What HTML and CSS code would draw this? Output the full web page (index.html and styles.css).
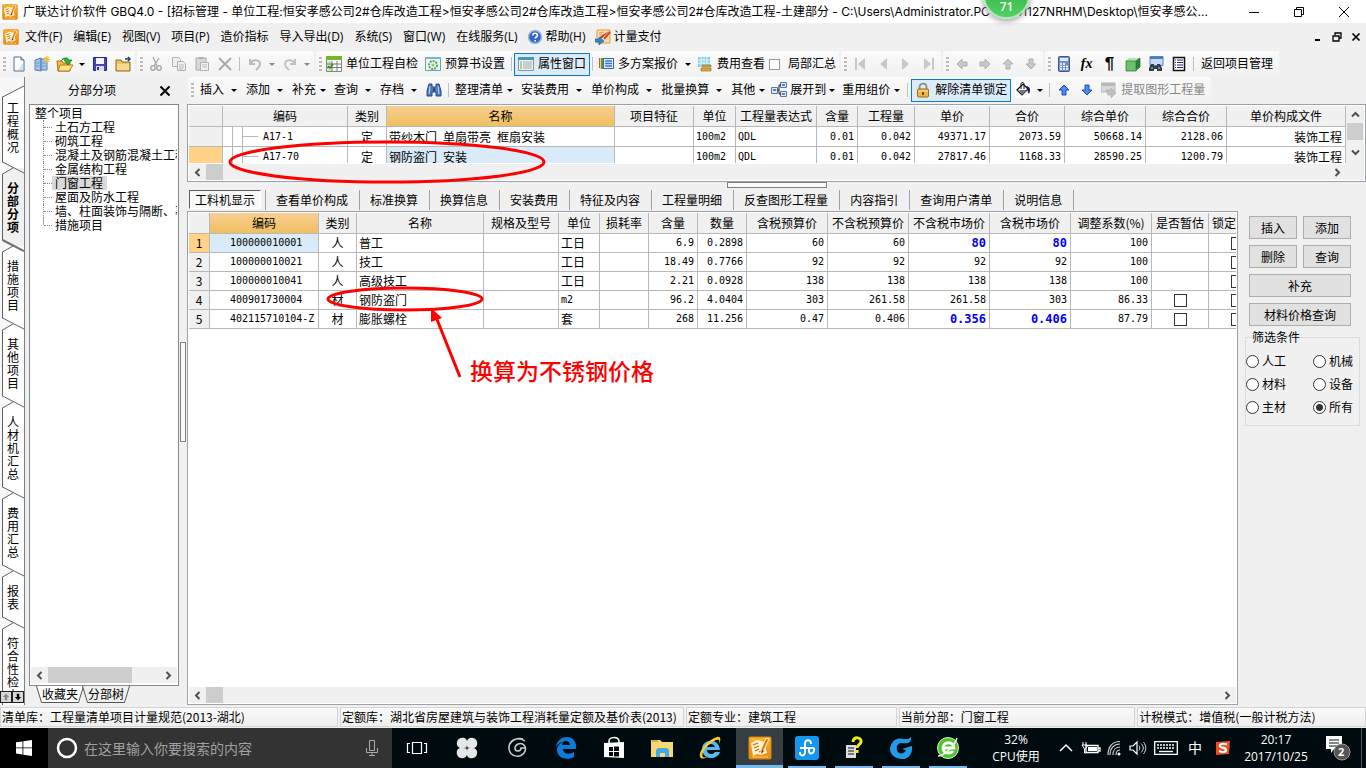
FILE: index.html
```html
<!DOCTYPE html>
<html lang="zh-CN">
<head>
<meta charset="utf-8">
<title>广联达计价软件 GBQ4.0</title>
<link rel="stylesheet" href="styles.css">
</head>
<body>
<svg class="defs" aria-hidden="true">
  <defs>
    <linearGradient id="gOrange" x1="0" y1="0" x2="0" y2="1"><stop offset="0" stop-color="#fbb62c"/><stop offset="1" stop-color="#ea860c"/></linearGradient>
    <symbol id="app" viewBox="0 0 24 24"><rect x="1" y="1" width="22" height="22" rx="1" fill="url(#gOrange)" stroke="#d9820c"/><path d="M3 7l6-3 4 1 3 1 3 11-6 2-4-1-4 2z" fill="#fff3cf"/><path d="M5 9l5-2M6 12l5-2M7 15l4-2M11 16l5-2" stroke="#c8650f" stroke-width="1.300"/><path d="M18 2l3 1-5 11-3 4 0-5z" fill="#e9791a" stroke="#fff3cf" stroke-width="1"/><path d="M13 18l1-4 2 1z" fill="#7c2c05"/><path d="M4 21h16" stroke="#fbd07a"/></symbol>
    <symbol id="new" viewBox="0 0 16 16"><path d="M3 1h7l3 3v11H3z" fill="#fff" stroke="#51718f"/><path d="M10 1v3h3" fill="#c6dcf2" stroke="#51718f"/><path d="M12 7v7H7z" fill="#cfe2f4"/></symbol>
    <symbol id="building" viewBox="0 0 16 16"><path d="M1 4l6-2v13l-6-1zM7 3h6v11H7z" fill="#c5dcf4" stroke="#4d7fb5"/><path d="M3 4v10M5 3v11M9 4v10M11 4v10M1 7h12M1 10h12" stroke="#6e9bcc" stroke-width=".8"/><path d="M13 0v7M9.500 3.500h7M11 1l4 5M15 1l-4 5" stroke="#f5c22b" stroke-width="1.200"/></symbol>
    <symbol id="open" viewBox="0 0 18 16"><path d="M1 5h5l1 2h7v8H2z" fill="#f1bd3b" stroke="#a87412"/><path d="M4 9h13l-4 6H2z" fill="#ffe188" stroke="#b07d1a"/><path d="M5 5c2-4 7-4 8-1h3l-4 5-4-5h2c-1-2-3-1-5 1z" fill="#35b52d" stroke="#14801a" stroke-width=".7"/></symbol>
    <symbol id="save" viewBox="0 0 16 16"><path d="M1.500 1.500h13v13h-13z" fill="#4545b5" stroke="#28287c"/><path d="M4 2h8v6H4z" fill="#f3f3fb"/><path d="M4 10h8v5H4z" fill="#dcdcea"/><path d="M5 11h2v3H5z" fill="#333399"/></symbol>
    <symbol id="folder" viewBox="0 0 16 16"><path d="M1 4h5l1 2h8v9H1z" fill="#e9c66c" stroke="#8e6b1d"/><path d="M2 8h12v6H2z" fill="#f5da8e"/><path d="M10 3h4M13 1l2 2-2 2" fill="none" stroke="#244a78" stroke-width="1.500"/></symbol>
    <symbol id="cut" viewBox="0 0 16 16"><path d="M5 1l4 9M11 2L6 10" stroke="#aaa" stroke-width="1.400"/><circle cx="5" cy="12" r="2.200" fill="none" stroke="#aaa" stroke-width="1.500"/><circle cx="11" cy="12" r="2.200" fill="none" stroke="#aaa" stroke-width="1.500"/></symbol>
    <symbol id="copy" viewBox="0 0 16 16"><path d="M1.500 1.500h6l2 2v7h-8z" fill="#eee" stroke="#b4b4b4"/><path d="M6.500 5.500h6l2 2v7h-8z" fill="#eee" stroke="#b0b0b0"/><path d="M8 9h5M8 11h5M8 13h4" stroke="#bbb"/></symbol>
    <symbol id="paste" viewBox="0 0 16 16"><path d="M2 2h10v12H2z" fill="#d8d8d8" stroke="#aaa"/><path d="M5 1h4v2H5z" fill="#aaa"/><path d="M6.500 6.500h8v8h-8z" fill="#f2f2f2" stroke="#b0b0b0"/><path d="M8 9h5M8 11h5" stroke="#bbb"/></symbol>
    <symbol id="del" viewBox="0 0 16 16"><path d="M2 2l12 12M14 2L2 14" stroke="#a8a8a8" stroke-width="1.800"/></symbol>
    <symbol id="undo" viewBox="0 0 16 16"><path d="M3 3v5h5M3 8c3-6 10-4 10 0 0 3-2 4-4 6" fill="none" stroke="#bbb" stroke-width="2"/></symbol>
    <symbol id="redo" viewBox="0 0 16 16"><path d="M13 3v5H8M13 8C10 2 3 4 3 8c0 3 2 4 4 6" fill="none" stroke="#c2c2c2" stroke-width="2"/></symbol>
    <symbol id="sheet" viewBox="0 0 16 16"><path d="M.5.5h15v15H.5z" fill="#fff" stroke="#7c8a7c"/><path d="M0 0h16v4H0z" fill="#72b62b"/><path d="M1 5h5v10H1z" fill="#cfe7b6"/><path d="M1 8h14M1 11.500h14M6 5v10M11 5v10" stroke="#777"/><path d="M2 10l2 2 3-4" fill="none" stroke="#2c8b20" stroke-width="1.400"/></symbol>
    <symbol id="budget" viewBox="0 0 16 16"><path d="M.5 1.500h15v13H.5z" fill="#eef6ec" stroke="#6b9fc2"/><path d="M0 1h16v2H0z" fill="#77b5da"/><circle cx="8" cy="9" r="4" fill="none" stroke="#53a95e" stroke-width="2" stroke-dasharray="2 1"/><circle cx="8" cy="9" r="1.500" fill="#8cc78e"/></symbol>
    <symbol id="props" viewBox="0 0 16 16"><path d="M.5 1.500h15v13H.5z" fill="#eef1f3" stroke="#8a9499"/><path d="M0 1h16v3H0z" fill="#419cac"/><path d="M2 6h2M2 8h2M2 10h2M2 12h2" stroke="#61ad5e"/><path d="M5 6h9M5 8h9M5 10h9M5 12h9" stroke="#a3aaae"/></symbol>
    <symbol id="multi" viewBox="0 0 16 16"><path d="M1 2h4v10H1z" fill="#e04c3b"/><path d="M2 2h4v11H2z" fill="#ffd53a"/><path d="M3 2h4v11H3z" fill="#47a54b"/><path d="M5.500 2.500h10v10h-10z" fill="#e8f1ff" stroke="#2e62b4"/><path d="M7 5h7M7 7.500h7M7 10h7" stroke="#3d74c7" stroke-width="1.500"/></symbol>
    <symbol id="cost" viewBox="0 0 16 16"><path d="M1 1h12v10H1z" fill="#7fd0e6"/><path d="M1 4h12M1 7h12M4 1v10M7 1v10M10 1v10" stroke="#fff" stroke-width=".8"/><path d="M5 9h9v2H5zM4 12h10v3H4z" fill="#d7a847" stroke="#966a20" stroke-width=".6"/></symbol>
    <symbol id="first" viewBox="0 0 16 16"><path d="M3 2h2v12H3zM13 2v12L6 8z" fill="#c8c8c8"/></symbol>
    <symbol id="prev" viewBox="0 0 16 16"><path d="M12 2v12L5 8z" fill="#c8c8c8"/></symbol>
    <symbol id="next" viewBox="0 0 16 16"><path d="M4 2v12l7-6z" fill="#c8c8c8"/></symbol>
    <symbol id="last" viewBox="0 0 16 16"><path d="M11 2h2v12h-2zM3 2v12l7-6z" fill="#c8c8c8"/></symbol>
    <symbol id="arr" viewBox="0 0 16 16"><path d="M8 3l5 5h-3v5H6V8H3z"/></symbol>
    <symbol id="calc" viewBox="0 0 16 16"><rect x="2.500" y=".5" width="11" height="15" rx="1" fill="#6e90cd" stroke="#3a5797"/><path d="M4 2h8v3H4z" fill="#dfe9fa"/><path d="M4 8h8M4 10.500h8M4 13h8" stroke="#fff" stroke-width="1.500" stroke-dasharray="2 1"/><path d="M10 8h2" stroke="#d33" stroke-width="1.500"/></symbol>
    <symbol id="cube" viewBox="0 0 16 16"><path d="M1 5l4-3h10v9l-4 3H1z" fill="#2c7d36"/><path d="M1 5h10v10H1z" fill="#6cc06e"/><path d="M1 5l4-3h10l-4 3z" fill="#b5e3b2"/><path d="M1 5h10v10H1zM11 5l4-3M15 2v9l-4 4" fill="none" stroke="#2b7232" stroke-width=".7"/></symbol>
    <symbol id="bino" viewBox="0 0 16 16"><path d="M3 2h3v3h4V2h3l2 7v5h-5v-4H6v4H1V9z" fill="#4f7ab8" stroke="#244a83"/><path d="M4 4L3 12M12 4l1 8" stroke="#c9daf0"/><path d="M7 6h2v3H7z" fill="#244a83"/></symbol>
    <symbol id="find" viewBox="0 0 16 16"><path d="M2 .5h13v9H2z" fill="#c6daf7" stroke="#5b80b9"/><path d="M2 1h13v2H2z" fill="#4c78c4"/><path d="M3 8h3v2h3V8h3l2 4v3H9v-2H6v2H1v-3z" fill="#333c48"/><path d="M3 12h2M10 12h2" stroke="#c0cddb"/></symbol>
    <symbol id="list" viewBox="0 0 16 16"><path d="M2.500 1.500h11v13h-11z" fill="#fff" stroke="#111" stroke-width="1.500"/><path d="M4 4h1M6 4h6M4 6.500h1M6 6.500h6M4 9h1M6 9h6M4 11.500h1M6 11.500h6" stroke="#22228c" stroke-width="1.200"/></symbol>
    <symbol id="help" viewBox="0 0 16 16"><circle cx="8" cy="8" r="6.500" fill="#3568c4" stroke="#9db7df" stroke-width="1.500"/><path d="M5.800 6.500c0-3 4.600-3 4.600 0 0 1.500-2.200 1.500-2.200 3M8.200 11v1.600" fill="none" stroke="#fff" stroke-width="1.600"/></symbol>
    <symbol id="pay" viewBox="0 0 16 16"><path d="M2 1h13v13H2z" fill="#fae0ae" stroke="#e49b31"/><path d="M4 4l5-1M4 6l3-1" stroke="#e0a050"/><path d="M14 2L7 9l-3 1 2-3z" fill="#b82b2b"/><path d="M15 3L9 10" stroke="#d24a26" stroke-width="2"/><path d="M0 10h4V8l5 4-5 4v-3H0z" fill="#2d8bd3" stroke="#1a5b9a" stroke-width=".6"/></symbol>
    <symbol id="expand" viewBox="0 0 16 16"><path d="M.5 5.500h6v6h-6zM9.500.5h6v5h-6zM9.500 9.500h6v5h-6z" fill="#dce7f8" stroke="#5377b0"/><path d="M6 8h2M8 3v9M8 3h2M8 12h2" fill="none" stroke="#222"/><path d="M2 8h3M11 3h3M11 12h3" stroke="#3863a6" stroke-width="1.500"/></symbol>
    <symbol id="lock" viewBox="0 0 16 16"><path d="M4.500 8V5c0-4.500 7-4.500 7 0v3" fill="none" stroke="#8d8d8d" stroke-width="1.800"/><rect x="2.500" y="7" width="11" height="8" rx="1" fill="#f0b545" stroke="#9a6b16"/><path d="M3 9h10" stroke="#fbe19c"/><path d="M8 10v3" stroke="#5a3c06" stroke-width="1.800"/></symbol>
    <symbol id="bucket" viewBox="0 0 16 16"><path d="M0 0h16v16H0z" fill="#fff"/><path d="M2 8l6-6 5 5-6 6z" fill="#fff" stroke="#111" stroke-width="1.200"/><path d="M4 8h8l-5 5z" fill="#777"/><path d="M6 7V2c0-2 3-2 3 0v5" fill="none" stroke="#111"/><path d="M11 4c4 0 5 4 3 8-1-2-2-3-1-5z" fill="#14147c"/></symbol>
    <symbol id="extract" viewBox="0 0 16 16"><path d="M0 1h14v9H0z" fill="#d8d8d8" stroke="#b5b5b5"/><path d="M0 1h14v3H0z" fill="#b8b8b8"/><path d="M5 8h5V6l5 5-5 5v-3H7z" fill="#c0c0c0" stroke="#aaa" stroke-width=".6"/></symbol>
  </defs>
</svg>

<div class="window">
  <header class="title">
    <svg class="i16"><use href="#app"/></svg>
    <h1>广联达计价软件 GBQ4.0 - [招标管理 - 单位工程:恒安孝感公司2#仓库改造工程&gt;恒安孝感公司2#仓库改造工程&gt;恒安孝感公司2#仓库改造工程-土建部分 - C:\Users\Administrator.PC-20141127NRHM\Desktop\恒安孝感公...</h1>
    <div class="winbtns">
      <button aria-label="最小化"><svg class="i12" viewBox="0 0 12 12"><path d="M1 6.500h10" stroke="#000"/></svg></button>
      <button aria-label="还原"><svg class="i12" viewBox="0 0 12 12"><path d="M1.500 3.500h7v7h-7zM3.500 3v-1.500h7v7H9" fill="none" stroke="#000"/></svg></button>
      <button aria-label="关闭"><svg class="i12" viewBox="0 0 12 12"><path d="M1 1l10 10M11 1L1 11" stroke="#000"/></svg></button>
    </div>
    <span class="bubble">71</span>
  </header>

  <nav class="menu">
    <svg class="i16"><use href="#app"/></svg>
    <button>文件(F)</button><button>编辑(E)</button><button>视图(V)</button><button>项目(P)</button><button>造价指标</button><button>导入导出(D)</button><button>系统(S)</button><button>窗口(W)</button><button>在线服务(L)</button>
    <button class="withicon"><svg class="i16"><use href="#help"/></svg>帮助(H)</button>
    <button class="withicon"><svg class="i16"><use href="#pay"/></svg>计量支付</button>
    <div class="mdi">
      <button aria-label="最小化文档"><svg class="i10" viewBox="0 0 10 10"><path d="M2 8h5" stroke="#000" stroke-width="2"/></svg></button>
      <button aria-label="还原文档"><svg class="i10" viewBox="0 0 10 10"><path d="M3 3V1h6v5H7M1 4h6v5H1z" fill="none" stroke="#000" stroke-width="1.300"/></svg></button>
      <button aria-label="关闭文档"><svg class="i10" viewBox="0 0 10 10"><path d="M1.500 1.500l7 7M8.500 1.500l-7 7" stroke="#000" stroke-width="1.700"/></svg></button>
    </div>
  </nav>

  <div class="bar">
    <div class="group">
      <i class="grip"></i>
      <button class="slot" aria-label="新建"><svg class="i16"><use href="#new"/></svg></button>
      <button class="slot" aria-label="新建项目"><svg class="i16"><use href="#building"/></svg></button>
      <button class="slot" aria-label="打开"><svg class="i18"><use href="#open"/></svg></button>
      <button class="arrow" aria-label="打开选项"></button>
      <button class="slot" aria-label="保存"><svg class="i16"><use href="#save"/></svg></button>
      <button class="slot" aria-label="文件夹"><svg class="i16"><use href="#folder"/></svg></button>
    </div>
    <div class="group">
      <i class="grip"></i>
      <button class="slot" aria-label="剪切"><svg class="i16"><use href="#cut"/></svg></button>
      <button class="slot" aria-label="复制"><svg class="i16"><use href="#copy"/></svg></button>
      <button class="slot" aria-label="粘贴"><svg class="i16"><use href="#paste"/></svg></button>
      <button class="slot" aria-label="删除行"><svg class="i16"><use href="#del"/></svg></button>
      <i class="sep"></i>
      <button class="slot" aria-label="撤销"><svg class="i16"><use href="#undo"/></svg></button>
      <button class="arrow dim" aria-label="撤销选项"></button>
      <button class="slot" aria-label="重做"><svg class="i16"><use href="#redo"/></svg></button>
      <button class="arrow dim" aria-label="重做选项"></button>
    </div>
    <div class="group">
      <i class="grip"></i>
      <button class="tool"><svg class="i16"><use href="#sheet"/></svg>单位工程自检</button>
      <button class="tool"><svg class="i16"><use href="#budget"/></svg>预算书设置</button>
      <i class="sep tight"></i>
      <button class="tool pressed"><svg class="i16"><use href="#props"/></svg>属性窗口</button>
      <i class="sep tight"></i>
      <button class="tool"><svg class="i16"><use href="#multi"/></svg>多方案报价</button>
      <button class="arrow" aria-label="报价选项"></button>
      <button class="tool"><svg class="i16"><use href="#cost"/></svg>费用查看</button>
      <label class="toolcheck"><input type="checkbox">局部汇总</label>
    </div>
    <div class="group">
      <i class="grip"></i>
      <button class="slot" aria-label="第一条"><svg class="i16"><use href="#first"/></svg></button>
      <button class="slot" aria-label="上一条"><svg class="i16"><use href="#prev"/></svg></button>
      <button class="slot" aria-label="下一条"><svg class="i16"><use href="#next"/></svg></button>
      <button class="slot" aria-label="最后一条"><svg class="i16"><use href="#last"/></svg></button>
    </div>
    <div class="group">
      <i class="grip"></i>
      <button class="slot" aria-label="左移"><svg class="i16 grey left"><use href="#arr"/></svg></button>
      <button class="slot" aria-label="右移"><svg class="i16 grey right"><use href="#arr"/></svg></button>
      <button class="slot" aria-label="上移"><svg class="i16 grey"><use href="#arr"/></svg></button>
      <button class="slot" aria-label="下移"><svg class="i16 grey down"><use href="#arr"/></svg></button>
    </div>
    <div class="group">
      <i class="grip"></i>
      <button class="slot" aria-label="计算器"><svg class="i16"><use href="#calc"/></svg></button>
      <button class="slot fx">fx</button>
      <button class="slot pilcrow">¶</button>
      <button class="slot" aria-label="图元"><svg class="i16"><use href="#cube"/></svg></button>
      <button class="slot" aria-label="查找"><svg class="i16"><use href="#find"/></svg></button>
      <button class="slot" aria-label="列表"><svg class="i16"><use href="#list"/></svg></button>
      <i class="sep"></i>
      <button class="plain">返回项目管理</button>
    </div>
  </div>

  <div class="body">
    <nav class="vtabs">
      <button>工程概况<svg viewBox="0 0 23 13"><path class="wedge" d="M0 1h1L12 7 1 13H0z"/><path class="edge" d="M1.500 1L23 12M1.500 13L12 7"/></svg></button>
      <button class="on">分部分项<svg viewBox="0 0 23 13"><path class="wedge" d="M0 1h1L12 7 1 13H0z"/><path class="edge bold" d="M1.500 1L23 12"/><path class="edge" d="M1.500 13L12 7"/></svg></button>
      <button>措施项目<svg viewBox="0 0 23 13"><path class="wedge" d="M0 1h1L12 7 1 13H0z"/><path class="edge" d="M1.500 1L23 12M1.500 13L12 7"/></svg></button>
      <button>其他项目<svg viewBox="0 0 23 13"><path class="wedge" d="M0 1h1L12 7 1 13H0z"/><path class="edge" d="M1.500 1L23 12M1.500 13L12 7"/></svg></button>
      <button>人材机汇总<svg viewBox="0 0 23 13"><path class="wedge" d="M0 1h1L12 7 1 13H0z"/><path class="edge" d="M1.500 1L23 12M1.500 13L12 7"/></svg></button>
      <button>费用汇总<svg viewBox="0 0 23 13"><path class="wedge" d="M0 1h1L12 7 1 13H0z"/><path class="edge" d="M1.500 1L23 12M1.500 13L12 7"/></svg></button>
      <button>报表<svg viewBox="0 0 23 13"><path class="wedge" d="M0 1h1L12 7 1 13H0z"/><path class="edge" d="M1.500 1L23 12M1.500 13L12 7"/></svg></button>
      <button class="rest">符合性检查</button>
      <svg class="cap" viewBox="0 0 23 20"><path class="wedge" d="M0 0h23v10L1 20H0z"/><path class="edge" d="M1.500 20L23 9"/></svg>
      <div class="updown">
        <button aria-label="向上滚动"><svg viewBox="0 0 10 10"><path d="M5 1l4 4H6.500v4h-3V5H1z" fill="#888"/></svg></button>
        <button aria-label="向下滚动"><svg viewBox="0 0 10 10"><path d="M5 9l4-4H6.500V1h-3v4H1z" fill="#000"/></svg></button>
      </div>
    </nav>

    <aside class="side">
      <div class="sidehead"><span>分部分项</span><button aria-label="关闭面板"><svg viewBox="0 0 12 12"><path d="M1.500 1.500l9 9M10.500 1.500l-9 9" stroke="#000" stroke-width="2"/></svg></button></div>
      <div class="treebox">
        <div class="root">整个项目</div>
        <ul class="tree">
          <li><span>土石方工程</span></li><li><span>砌筑工程</span></li><li><span>混凝土及钢筋混凝土工程</span></li><li><span>金属结构工程</span></li><li class="sel"><span>门窗工程</span></li><li><span>屋面及防水工程</span></li><li><span>墙、柱面装饰与隔断、幕墙</span></li><li><span>措施项目</span></li>
        </ul>
        <div class="hs"><svg viewBox="0 0 9 9"><path d="M6.500 1L3 4.500 6.500 8"/></svg><i class="thumb wide"></i><svg class="end" viewBox="0 0 9 9"><path d="M2.500 1L6 4.500 2.500 8"/></svg></div>
      </div>
      <div class="sidetabs">
        <button class="t1"><svg viewBox="0 0 48 17" preserveAspectRatio="none"><path d="M.5 0l5 16.500h37L47.500 0" fill="#fff" stroke="#555"/></svg><span>收藏夹</span></button>
        <button class="t2"><svg viewBox="0 0 48 17" preserveAspectRatio="none"><path d="M.5 0l5 16.500h37L47.500 0" fill="#f0f0f0" stroke="#555"/></svg><span>分部树</span></button>
      </div>
    </aside>

    <div class="vsplit"><i></i></div>

    <main class="work">
      <div class="bar second">
        <div class="group">
          <i class="grip"></i>
          <button class="dd">插入</button><button class="dd">添加</button><button class="dd near">补充</button><button class="dd">查询</button><button class="dd">存档</button>
          <button class="slot" aria-label="查找"><svg class="i16"><use href="#bino"/></svg></button>
          <i class="sep"></i>
          <button class="dd near">整理清单</button><button class="dd">安装费用</button><button class="dd">单价构成</button><button class="dd">批量换算</button><button class="dd near">其他</button>
          <button class="tool expand"><svg class="i16"><use href="#expand"/></svg>展开到</button><button class="arrow" aria-label="展开选项"></button>
          <button class="dd near">重用组价</button>
          <i class="sep"></i>
          <button class="tool pressed"><svg class="i16"><use href="#lock"/></svg>解除清单锁定</button>
          <button class="slot" aria-label="填充颜色"><svg class="i16"><use href="#bucket"/></svg></button><button class="arrow" aria-label="颜色选项"></button>
          <i class="sep"></i>
          <button class="slot" aria-label="上移清单"><svg class="i16 blue"><use href="#arr"/></svg></button>
          <button class="slot" aria-label="下移清单"><svg class="i16 blue down"><use href="#arr"/></svg></button>
          <button class="tool dimtext"><svg class="i16"><use href="#extract"/></svg>提取图形工程量</button>
        </div>
      </div>

      <section class="grid upper">
        <div class="uppermain">
          <div class="clip">
            <table>
              <colgroup><col class="w34"><col class="w125"><col class="w39"><col class="w228"><col class="w79"><col class="w42"><col class="w81"><col class="w41"><col class="w57"><col class="w75"><col class="w75"><col class="w81"><col class="w81"><col class="w119"></colgroup>
              <thead><tr><th></th><th>编码</th><th>类别</th><th class="hot">名称</th><th>项目特征</th><th>单位</th><th>工程量表达式</th><th>含量</th><th>工程量</th><th>单价</th><th>合价</th><th>综合单价</th><th>综合合价</th><th>单价构成文件</th></tr></thead>
              <tbody>
                <tr><th></th><td class="node n"><i></i>A17-1</td><td class="mid">定</td><td>带纱木门&ensp;单扇带亮&ensp;框扇安装</td><td></td><td class="n">100m2</td><td class="n">QDL</td><td class="n r">0.01</td><td class="n r">0.042</td><td class="n r">49371.17</td><td class="n r">2073.59</td><td class="n r">50668.14</td><td class="n r">2128.06</td><td class="r">装饰工程</td></tr>
                <tr><th class="cur"></th><td class="node n"><i></i>A17-70</td><td class="mid">定</td><td class="pick">钢防盗门&ensp;安装</td><td></td><td class="n">100m2</td><td class="n">QDL</td><td class="n r">0.01</td><td class="n r">0.042</td><td class="n r">27817.46</td><td class="n r">1168.33</td><td class="n r">28590.25</td><td class="n r">1200.79</td><td class="r">装饰工程</td></tr>
              </tbody>
            </table>
          </div>
          <div class="hs"><svg viewBox="0 0 9 9"><path d="M6.500 1L3 4.500 6.500 8"/></svg><i class="thumb"></i><svg class="end" viewBox="0 0 9 9"><path d="M2.500 1L6 4.500 2.500 8"/></svg></div>
        </div>
        <div class="vs"><svg viewBox="0 0 9 9"><path d="M1 6.500L4.500 3 8 6.500"/></svg><i></i><svg viewBox="0 0 9 9"><path d="M1 2.500L4.500 6 8 2.500"/></svg></div>
      </section>

      <div class="hsplit"><i></i></div>

      <nav class="tabs"><button class="on">工料机显示</button><button>查看单价构成</button><button>标准换算</button><button>换算信息</button><button>安装费用</button><button>特征及内容</button><button>工程量明细</button><button>反查图形工程量</button><button>内容指引</button><button>查询用户清单</button><button>说明信息</button></nav>

      <div class="lower">
        <section class="grid detail">
          <div class="clip">
            <table>
              <colgroup><col class="w21"><col class="w109"><col class="w38"><col class="w127"><col class="w75"><col class="w41"><col class="w49"><col class="w49"><col class="w49"><col class="w81"><col class="w81"><col class="w81"><col class="w81"><col class="w81"><col class="w57"><col class="w57"></colgroup>
              <thead><tr><th></th><th class="hot">编码</th><th>类别</th><th>名称</th><th>规格及型号</th><th>单位</th><th>损耗率</th><th>含量</th><th>数量</th><th>含税预算价</th><th>不含税预算价</th><th>不含税市场价</th><th>含税市场价</th><th>调整系数(%)</th><th>是否暂估</th><th class="l">锁定</th></tr></thead>
              <tbody>
                <tr><th class="cur">1</th><td class="code n pick">100000010001</td><td class="mid">人</td><td>普工</td><td></td><td>工日</td><td></td><td class="n r">6.9</td><td class="n r">0.2898</td><td class="n r">60</td><td class="n r">60</td><td class="b r">80</td><td class="b r">80</td><td class="n r">100</td><td></td><td><input type="checkbox" aria-label="锁定第1行"></td></tr>
                <tr><th>2</th><td class="code n">100000010021</td><td class="mid">人</td><td>技工</td><td></td><td>工日</td><td></td><td class="n r">18.49</td><td class="n r">0.7766</td><td class="n r">92</td><td class="n r">92</td><td class="n r">92</td><td class="n r">92</td><td class="n r">100</td><td></td><td><input type="checkbox" aria-label="锁定第2行"></td></tr>
                <tr><th>3</th><td class="code n">100000010041</td><td class="mid">人</td><td>高级技工</td><td></td><td>工日</td><td></td><td class="n r">2.21</td><td class="n r">0.0928</td><td class="n r">138</td><td class="n r">138</td><td class="n r">138</td><td class="n r">138</td><td class="n r">100</td><td></td><td><input type="checkbox" aria-label="锁定第3行"></td></tr>
                <tr><th>4</th><td class="code n">400901730004</td><td class="mid">材</td><td>钢防盗门</td><td></td><td class="n">m2</td><td></td><td class="n r">96.2</td><td class="n r">4.0404</td><td class="n r">303</td><td class="n r">261.58</td><td class="n r">261.58</td><td class="n r">303</td><td class="n r">86.33</td><td><input type="checkbox" aria-label="暂估第4行"></td><td><input type="checkbox" aria-label="锁定第4行"></td></tr>
                <tr><th>5</th><td class="code n">402115710104-Z</td><td class="mid">材</td><td>膨胀螺栓</td><td></td><td>套</td><td></td><td class="n r">268</td><td class="n r">11.256</td><td class="n r">0.47</td><td class="n r">0.406</td><td class="b r">0.356</td><td class="b r">0.406</td><td class="n r">87.79</td><td><input type="checkbox" aria-label="暂估第5行"></td><td><input type="checkbox" aria-label="锁定第5行"></td></tr>
              </tbody>
            </table>
          </div>
          <div class="hs"><svg viewBox="0 0 9 9"><path d="M6.500 1L3 4.500 6.500 8"/></svg><i class="thumb"></i><svg class="end" viewBox="0 0 9 9"><path d="M2.500 1L6 4.500 2.500 8"/></svg></div>
        </section>
        <aside class="actions">
          <div class="btns"><button>插入</button><button>添加</button><button>删除</button><button>查询</button><button class="full">补充</button><button class="full">材料价格查询</button></div>
          <fieldset><legend>筛选条件</legend>
            <label><input type="radio" name="f">人工</label><label><input type="radio" name="f">机械</label>
            <label><input type="radio" name="f">材料</label><label><input type="radio" name="f">设备</label>
            <label><input type="radio" name="f">主材</label><label><input type="radio" name="f" checked>所有</label>
          </fieldset>
        </aside>
      </div>
    </main>
  </div>

  <footer class="status"><span>清单库：工程量清单项目计量规范(2013-湖北)</span><span>定额库：湖北省房屋建筑与装饰工程消耗量定额及基价表(2013)</span><span>定额专业：建筑工程</span><span>当前分部：门窗工程</span><span>计税模式：增值税(一般计税方法)</span></footer>

  <div class="taskbar">
    <button class="start" aria-label="开始"><svg viewBox="0 0 16 16"><path d="M0 2.300l6.500-.9v6.100H0zM7.300 1.300L16 0v7.500H7.300zM0 8.300h6.500v6.200L0 13.600zM7.300 8.300H16V16l-8.700-1.300z" fill="#fff"/></svg></button>
    <label class="search"><svg class="ring" viewBox="0 0 22 22"><circle cx="11" cy="11" r="9" fill="none" stroke="#fff" stroke-width="2.500"/></svg><input type="text" placeholder="在这里输入你要搜索的内容" aria-label="搜索"><svg class="mic" viewBox="0 0 12 16"><path d="M3.500.5h5v10h-5zM.5 8v4.500h11V8M6 12.500v3M3 15.500h6" fill="none" stroke="#aaa"/></svg></label>
    <div class="pins">
      <button class="a" aria-label="任务视图"><svg viewBox="0 0 24 24"><path d="M7.500 6.500h9v11h-9zM5 7.500H2.500v9H5M19 7.500h2.500v9H19" fill="none" stroke="#fff" stroke-width="1.200"/></svg></button>
      <button class="a" aria-label="四叶应用"><svg viewBox="0 0 24 24"><path d="M11.500 11.500C4 14 1 10 2 6c1-5 7-5 9-3 2 3 1 5 .5 8.500zM12.500 11.500C10 4 14 1 18 2c5 1 5 7 3 9-3 2-5 1-8.500.5zM12.500 12.500C20 10 23 14 22 18c-1 5-7 5-9 3-2-3-1-5-.5-8.500zM11.500 12.500C14 20 10 23 6 22c-5-1-5-7-3-9 3-2 5-1 8.500-.5z" fill="#e7e7e7"/></svg></button>
      <button class="a" aria-label="螺旋应用"><svg viewBox="0 0 24 24"><path d="M20 5C13 0 3 4 4 13c1 7 10 10 15 4 4-6-1-11-6-9-4 2-4 7 0 7 2 0 3-1 3-3h4M18 3C9 1 1 8 5 16" fill="none" stroke="#ccc" stroke-width="1.500"/></svg></button>
      <button class="b" aria-label="Edge"><svg viewBox="0 0 24 24"><path d="M2 11C3 4 8 1 13 1c6 0 9 5 9 9v3H9c0 5 6 6 11 3v5c-7 4-17 1-17-7 0-4 3-7 7-9-1 1-2 3-2 4h8C16 3 6 4 2 11z" fill="#0b7bdc"/></svg></button>
      <button class="b" aria-label="应用商店"><svg viewBox="0 0 24 24"><path d="M2 7l20-1v16L2 21z" fill="#fff"/><path d="M7 8V5c0-4 9-5 10 0v2" fill="none" stroke="#fff" stroke-width="1.500"/><path d="M7 11h4v4H7zM12 10.500h5V15h-5zM7 16h4v4H7zM12 16h5v4.500h-5z" fill="#000b10"/></svg></button>
      <button class="b" aria-label="文件资源管理器"><svg viewBox="0 0 24 24"><path d="M1 4h9l2 2h11v15H1z" fill="#f8d775"/><path d="M2 4h6v2H2z" fill="#dba63a"/><path d="M6 21v-7l2-2h9l2 2v7h-4v-4H10v4z" fill="#42a9e6"/></svg></button>
      <button class="b" aria-label="Internet Explorer"><svg viewBox="0 0 24 24"><path d="M22 14H9c0 5 6 5 8 2h5c-3 9-18 8-18-3C4 3 21 1 22 14zM9 11h8c-1-4-7-4-8 0z" fill="#55baf0"/><path d="M3 22C-2 18 9 4 19 1c4-1 4 3 2 7 1-4 0-5-3-4C10 8 2 17 5 21c1 1 3 0 5-1-3 3-6 3-7 2z" fill="#f7cc2c"/></svg></button>
      <button class="c active" aria-label="广联达"><svg viewBox="0 0 24 24"><use href="#app"/></svg></button>
      <button class="c run" aria-label="云应用"><svg viewBox="0 0 24 24"><rect width="24" height="24" rx="3" fill="#1496f0"/><path d="M16 8c0-5-6-5-6 0v8c0 5-6 4-5 0M5 12h14M14 12v3c0 4 6 3 5-3" fill="none" stroke="#fff" stroke-width="2"/></svg></button>
      <button class="c run" aria-label="帮助文档"><svg viewBox="0 0 24 24"><path d="M4 9h10v13H4z" fill="#ddd"/><path d="M6 12h6M6 15h6M6 18h6" stroke="#555" stroke-width="1.500"/><path d="M11 6c0-6 9-5 8 0-1 3-4 3-4 6M15 14v3" fill="none" stroke="#f5ed12" stroke-width="3"/></svg></button>
      <button class="c run" aria-label="G应用"><svg viewBox="0 0 24 24"><path d="M22 1c1 6-4 7-9 6-4 0-6 3-5 7 1 5 8 4 9 0l-4-1 10-3c1 8-4 14-11 13C3 22-1 15 2 9c3-7 9-7 13-6 4 0 5 0 7-2z" fill="#239bed"/></svg></button>
      <button class="c run" aria-label="绿色浏览器"><svg viewBox="0 0 24 24"><circle cx="12" cy="12" r="10.500" fill="#4fc22e" stroke="#d8f5ca"/><path d="M6 12h12c0-7-11-7-11 0 0 6 8 6 10 3" fill="none" stroke="#fff" stroke-width="2.800"/><path d="M2 20C8 20 18 11 21 2" fill="none" stroke="#eafbdc" stroke-width="1.500"/></svg></button>
    </div>
    <div class="cpu">32%<br>CPU使用</div>
    <div class="tray">
      <svg viewBox="0 0 24 16"><path d="M6 11l6-6 6 6" fill="none" stroke="#fff" stroke-width="1.500"/></svg>
      <svg viewBox="0 0 24 16"><path d="M8 5.500h12v7H8zM20 8h2v3h-2" fill="none" stroke="#fff" stroke-width="1.300"/><path d="M10 7h9v4h-9z" fill="#fff"/><path d="M5 2v3M8 2v3M4 5h5v2L6.500 9zM6.500 9v4H8" fill="none" stroke="#fff"/></svg>
      <svg viewBox="0 0 24 16"><path d="M8 15C8 8 12 4 18 4M6 15C6 6 11 1.500 18 1.500M11 15c0-5 3-8 7-8M14 15c0-3 1-5 4-5" fill="none" stroke="#ccc" stroke-width="1.200"/><circle cx="17" cy="14" r="1.500" fill="#fff"/></svg>
      <svg viewBox="0 0 24 16"><path d="M4 6h3l4-4v12l-4-4H4z" fill="none" stroke="#fff" stroke-width="1.200"/><path d="M13 5.500c1 1 1 4 0 5M15 3.500c3 3 3 6 0 9M17.500 2c3 4 3 8 0 12" fill="none" stroke="#ddd"/></svg>
      <svg class="kbd" viewBox="0 0 24 16"><path d="M.7 1.700h22.600v12.600H.7z" fill="none" stroke="#fff" stroke-width="1.300"/><path d="M3 5h18M3 8h18" stroke="#fff" stroke-width="1.400" stroke-dasharray="2 1"/><path d="M5 11.500h14" stroke="#fff" stroke-width="1.400"/></svg>
      <span>中</span>
      <svg class="sogou" viewBox="0 0 16 16"><path d="M1 2l14-1-1 13-13 1z" fill="#f04b22"/><path d="M12 4.500C8 3 4 4 5 6.500c1 1.500 6 1 6 3.500s-4 2.500-7 1" fill="none" stroke="#fff" stroke-width="2.200"/></svg>
    </div>
    <div class="clock">20:17<br>2017/10/25</div>
    <button class="notice" aria-label="通知"><svg viewBox="0 0 28 28"><path d="M2 2h16v13H10l-3 4v-4H2z" fill="#fff"/><path d="M5 6h10M5 9h10M5 12h8" stroke="#111"/><circle cx="18" cy="18" r="8" fill="#555" stroke="#999"/></svg><b>2</b></button>
    <i class="peek"></i>
  </div>

  <div class="marks">
    <svg><g fill="none" stroke="#f00" stroke-width="3"><ellipse cx="387" cy="162" rx="157" ry="20"/><ellipse cx="405" cy="299" rx="77" ry="11"/><path d="M460 377l-24-60"/></g><path d="M431 308v14l11-4z" fill="#f00"/></svg>
    <p>换算为不锈钢价格</p>
  </div>
</div>
</body>
</html>
```
FILE: styles.css
```css
* { box-sizing: border-box; }
body { margin: 0; font: 12px/16px "Open Sans", "Noto Sans CJK SC", sans-serif; color: #000; background: #f0f0f0; }
button { margin: 0; padding: 0; border: 0; background: none; color: inherit; font: inherit; white-space: nowrap; }
svg { display: block; flex: none; }
.defs { position: absolute; width: 0; height: 0; }
.i10 { width: 10px; height: 10px; }
.i12 { width: 12px; height: 12px; }
.i16 { width: 16px; height: 16px; }
.i18 { width: 18px; height: 16px; }
.grey { fill: #c8c8c8; stroke: #b0b0b0; }
.blue { fill: #4d8bf0; stroke: #1c50b8; }
.left { transform: rotate(-90deg); }
.right { transform: rotate(90deg); }
.down { transform: rotate(180deg); }

.window { position: relative; display: flex; flex-direction: column; height: 100vh; overflow: hidden; }

/* title and menu */
.title { position: relative; display: flex; align-items: center; height: 23px; flex: none; padding-left: 2px; gap: 5px; background: #fff; }
.title h1 { flex: 1; margin: 0; font: 12px/18px Inter, "Noto Sans CJK SC", sans-serif; white-space: nowrap; }
.winbtns { display: flex; }
.winbtns button { display: grid; place-items: center; width: 45px; height: 23px; }
.bubble { position: absolute; left: 983px; top: -28px; width: 47px; height: 47px; border-radius: 50%; border: 2px solid #aee8b5; background: linear-gradient(#2aa33d, #52d164); box-shadow: 0 2px 6px #999; color: #fff; font-weight: 600; padding-top: 25px; text-align: center; }
.menu { display: flex; align-items: center; height: 28px; flex: none; padding-left: 3px; }
.menu > button { margin-left: 11px; }
.menu > svg + button { margin-left: 6px; }
.menu > .withicon { display: flex; gap: 3px; margin-left: 9px; }
.mdi { display: flex; gap: 9px; margin-left: auto; padding-right: 5px; }

/* toolbars */
.bar { display: flex; flex: none; height: 26px; gap: 2px; }
.group { display: flex; align-items: center; height: 26px; padding-right: 1px; border-radius: 2px; background: linear-gradient(#fafafa, #f1f1f1); }
.grip { width: 3px; height: 15px; margin: 0 1px 0 3px; background: repeating-linear-gradient(#bbb 0 2px, transparent 2px 4px); flex: none; }
.sep { width: 1px; height: 14px; margin: 0 3px; background: #c0c0c0; flex: none; }
.sep.tight { margin: 0 2px; }
.slot { display: grid; place-items: center; width: 23px; height: 22px; flex: none; }
.arrow { display: grid; place-items: center; width: 12px; height: 22px; }
.arrow::after, .dd::after { content: ""; border: 3px solid transparent; border-top-color: #000; border-bottom-width: 0; }
.arrow.dim::after { border-top-color: #888; }
.tool { display: flex; align-items: center; height: 22px; gap: 4px; padding: 0 4px 0 3px; }
.pressed { background: #dcebf8; border: 1px solid #0a78d4; padding: 0 3px; height: 23px; }
.dimtext { color: #888; }
.plain { padding: 0 5px 0 4px; }
.toolcheck { display: flex; align-items: center; gap: 8px; padding-right: 2px; }
.toolcheck input { appearance: none; width: 11px; height: 11px; margin: 0; border: 1px solid #999; background: #fff; }
.fx { font: italic bold 14px "Liberation Serif", serif; }
.pilcrow { font: bold 17px "Liberation Sans", sans-serif; }
.dd { display: flex; align-items: center; margin-left: 4px; padding-right: 5px; gap: 7px; }
.dd.near { gap: 4px; padding-right: 4px; }
.tool.expand { gap: 3px; padding: 0 0 0 2px; }
.second .grip { margin-right: 2px; }
.second .sep { margin: 0 2px 0 3px; }
.second .pressed { margin-left: 1px; }

/* workspace */
.body { display: flex; flex: 1; min-height: 0; }
.vtabs { position: relative; display: flex; flex-direction: column; width: 25px; margin-bottom: 2px; overflow: hidden; border-right: 1px solid #808080; background: #f7f7f7; font: 12px/13px "Noto Sans CJK SC", sans-serif; }
.vtabs > button { position: relative; flex: none; display: block; margin-left: 2px; padding: 13px 5px 13px 4px; width: 22px; border-left: 1px solid #606060; background: #fff; white-space: normal; word-break: break-all; line-height: 13px; text-align: center; }
.vtabs > button:first-child { padding: 24px 5px 15px 4px; }
.vtabs > .on { background: #f0f0f0; font-weight: 700; }
.vtabs > button > svg { position: absolute; left: -2px; bottom: -6px; width: 23px; height: 13px; z-index: 1; }
.wedge { fill: #f7f7f7; }
.edge { fill: none; stroke: #606060; }
.edge.bold { stroke-width: 2; stroke: #707070; }
.vtabs .cap { position: absolute; left: 1px; top: 0; width: 23px; height: 20px; }
.vtabs .rest { padding-bottom: 30px; }
.updown { position: absolute; left: 0; bottom: 2px; display: flex; z-index: 2; }
.updown button { display: grid; place-items: center; width: 12px; height: 12px; background: #d8d8d8; border: 1px solid #222; }
.updown svg { width: 8px; height: 8px; }

.side { display: flex; flex-direction: column; width: 154px; padding-left: 4px; flex: none; }
.sidehead { display: flex; align-items: center; justify-content: space-between; height: 27px; flex: none; padding: 0 8px 0 39px; }
.sidehead svg { width: 12px; height: 12px; }
.treebox { display: flex; flex-direction: column; flex: 1; min-height: 0; overflow: hidden; padding: 1px 1px 2px; border: 1px solid #828790; background: #fff; font: 12px/14px "Noto Sans CJK SC", sans-serif; white-space: nowrap; }
.root { padding-left: 4px; }
.tree { list-style: none; margin: 0 0 auto 12px; padding: 0; overflow: hidden; }
.tree li { display: flex; height: 14px; border-left: 1px dotted #888; }
.tree li:last-child { border-image: linear-gradient(#aaa 50%, transparent 50%) 1; }
.tree li::before { content: ""; width: 8px; height: 7px; border-bottom: 1px dotted #888; flex: none; }
.tree span { padding: 0 4px 0 3px; }
.tree .sel span { background: #d9d9d9; }
.hs { display: flex; align-items: center; height: 16px; flex: none; background: #f0f0f0; }
.hs svg, .vs svg { width: 9px; height: 9px; margin: 0 4px; fill: none; stroke: #505050; stroke-width: 2; }
.hs .end { margin-left: auto; }
.hs .thumb { width: 17px; height: 16px; background: #cdcdcd; }
.hs .wide { width: 84px; }
.sidetabs { display: flex; height: 21px; flex: none; padding-left: 7px; font: 12px/15px "Noto Sans CJK SC", sans-serif; }
.sidetabs button { position: relative; display: flex; justify-content: center; width: 48px; height: 17px; }
.sidetabs svg { position: absolute; inset: 0; width: 100%; height: 100%; }
.sidetabs span { position: relative; }
.sidetabs .t2 { margin-left: -2px; }

.vsplit { display: flex; align-items: center; width: 8px; flex: none; padding: 0 1px; }
.vsplit i { width: 6px; height: 100px; border: 1px solid #808080; background: #fafafa; }
.work { display: flex; flex-direction: column; flex: 1; min-width: 0; }
.second { margin-bottom: 1px; }
.second .group { margin-left: 1px; padding-right: 2px; }

.grid { border: 1px solid #a0a0a8; background: #fff; font-family: "Noto Sans CJK SC", sans-serif; }
.upper { display: flex; height: 78px; flex: none; padding: 1px; }
.uppermain { flex: 1; min-width: 0; display: flex; flex-direction: column; }
.clip { flex: 1; min-height: 0; overflow: hidden; }
.grid .hs { margin-top: 1px; }
.vs { display: flex; flex-direction: column; align-items: center; width: 18px; padding-bottom: 18px; background: #f0f0f0; }
.vs svg { margin: 4px; }
.vs i { width: 16px; height: 17px; margin-bottom: 4px; background: #cdcdcd; flex: none; }
table { table-layout: fixed; width: 0; border-collapse: separate; border-spacing: 0; }
th, td { height: 19px; padding: 0 2px; border-right: 1px solid #b8b8b8; border-bottom: 1px solid #b8b8b8; font-size: 12px; line-height: 16px; font-weight: 400; text-align: left; white-space: nowrap; overflow: hidden; }
thead th { height: 21px; }
.upper tbody tr > * { height: 20px; }
th { background: #f0f0f0; text-align: center; }
th.l { text-align: left; padding-left: 3px; }
.hot { background: linear-gradient(#f7cf92, #f0bf60); }
.cur { background: #ffd288; }
.pick { background: #d9eaf8; }
.mid { text-align: center; }
.r { text-align: right; }
td.r { padding-right: 3px; }
td.n { font: 10px/16px "DejaVu Sans Mono", monospace; }
td.b { font: bold 12px/16px "DejaVu Sans Mono", monospace; color: #00f; }
td.code { padding-left: 20px; }
td.node { background: linear-gradient(90deg, transparent 9px, #b8b8b8 9px 10px, transparent 10px 19px, #b8b8b8 19px 20px, transparent 20px); padding-left: 19px; }
.node i { display: inline-block; width: 16px; height: 1px; margin-right: 5px; background: #b8b8b8; vertical-align: middle; }
td input { appearance: none; display: block; width: 13px; height: 13px; margin: 0 auto; border: 1px solid #333; background: #fff; }
.w21 { width: 21px; } .w34 { width: 34px; } .w38 { width: 38px; } .w39 { width: 39px; } .w41 { width: 41px; } .w42 { width: 42px; }
.w49 { width: 49px; } .w57 { width: 57px; } .w75 { width: 75px; } .w79 { width: 79px; } .w81 { width: 81px; } .w109 { width: 109px; }
.w119 { width: 119px; } .w125 { width: 125px; } .w127 { width: 127px; } .w228 { width: 228px; }

.hsplit { display: flex; justify-content: center; height: 6px; flex: none; }
.hsplit i { width: 100px; height: 6px; border: 1px solid #808080; background: #fafafa; }
.tabs { display: flex; align-items: center; height: 23px; flex: none; padding-left: 2px; font-family: "Noto Sans CJK SC", sans-serif; }
.tabs button { height: 20px; padding: 0 11px 0 10px; border-right: 1px solid #a0a0a0; }
.tabs .on { height: 19px; margin-right: 4px; padding: 0 5px; border: 1px solid #fff; border-top-color: #606060; border-left-color: #606060; background: #f8f8f8; }
.tabs .on + button { border-left: 1px solid #a0a0a0; }
.lower { display: flex; flex: 1; min-height: 0; }
.detail { display: flex; flex-direction: column; flex: 1; min-width: 0; margin-bottom: 2px; padding: 1px; }
.actions { width: 128px; flex: none; padding: 5px 6px 0 7px; font-family: "Noto Sans CJK SC", sans-serif; }
.btns { display: grid; grid-template-columns: 48px 48px; grid-auto-rows: 23px; gap: 6px; padding-left: 4px; }
.btns button { border: 1px solid #adadad; background: #e1e1e1; }
.btns .full { grid-column: 1 / 3; }
fieldset { display: grid; grid-template-columns: 67px 1fr; row-gap: 7px; margin: 4px 0 0; padding: 9px 0 10px; border: 1px solid #dcdcdc; min-width: 0; }
legend { margin-left: 6px; padding: 0; line-height: 14px; }
fieldset label { display: flex; align-items: center; gap: 3px; }
fieldset input { appearance: none; width: 13px; height: 13px; margin: 0; border: 1px solid #333; border-radius: 50%; background: #fff; }
fieldset input:checked { background: radial-gradient(#333 0 3px, #fff 4px); }

.status { display: grid; grid-template-columns: 340fr 346fr 212fr 238fr 230fr; gap: 2px; height: 21px; flex: none; padding-bottom: 1px; font: 12px/18px "Noto Sans CJK SC", sans-serif; }
.status span { border: 1px solid #d4d4d4; padding-left: 1px; white-space: nowrap; overflow: hidden; min-width: 0; background: linear-gradient(#fafafa, #eee); }

/* taskbar */
.taskbar { display: flex; height: 40px; flex: none; background: #000b10; color: #fff; }
.start { display: grid; place-items: center; width: 48px; background: #000; }
.start svg { width: 16px; height: 16px; }
.search { display: flex; align-items: center; width: 344px; padding: 0 14px 0 8px; background: #333; }
.ring { width: 22px; height: 22px; }
.search input { flex: 1; min-width: 0; border: 0; padding: 0 0 0 6px; background: none; color: #fff; font: 14px/20px "Noto Sans CJK SC", sans-serif; }
.search input::placeholder { color: #a0a0a0; }
.mic { width: 12px; height: 16px; }
.pins { display: flex; }
.pins button { display: grid; place-items: center; height: 40px; }
.pins svg { width: 24px; height: 24px; }
.a { width: 50px; }
.b { width: 48px; }
.c { width: 47px; }
.pins .active { margin-left: 2px; background: #343e43; box-shadow: inset 0 -3px #76b9ed; }
.pins .run { background: linear-gradient(#76b9ed, #76b9ed) center bottom / 38px 2px no-repeat; }
.cpu, .clock { text-align: center; line-height: 17px; padding-top: 3px; }
.cpu { width: 50px; margin-left: 20px; }
.tray { display: flex; align-items: center; margin-left: 13px; flex: 1; }
.tray svg { width: 24px; height: 16px; }
.tray .kbd { margin: 0 5px 0 4px; }
.tray span { width: 24px; text-align: center; font-size: 14px; line-height: 18px; }
.tray .sogou { width: 16px; margin-left: 8px; }
.clock { width: 70px; margin-right: 12px; }
.notice { position: relative; width: 30px; display: grid; place-items: center; }
.notice svg { width: 28px; height: 28px; }
.notice b { position: absolute; left: 15px; top: 17px; font-size: 11px; line-height: 14px; }
.peek { width: 5px; margin-left: 8px; border-left: 1px solid #555; }

/* review marks drawn over the grids */
.marks { position: absolute; inset: 0; pointer-events: none; }
.marks svg { width: 100%; height: 100%; }
.marks p { position: absolute; left: 470px; top: 356px; margin: 0; color: #f00; font: 500 23px/28px "Noto Sans CJK SC", sans-serif; white-space: nowrap; }
```
